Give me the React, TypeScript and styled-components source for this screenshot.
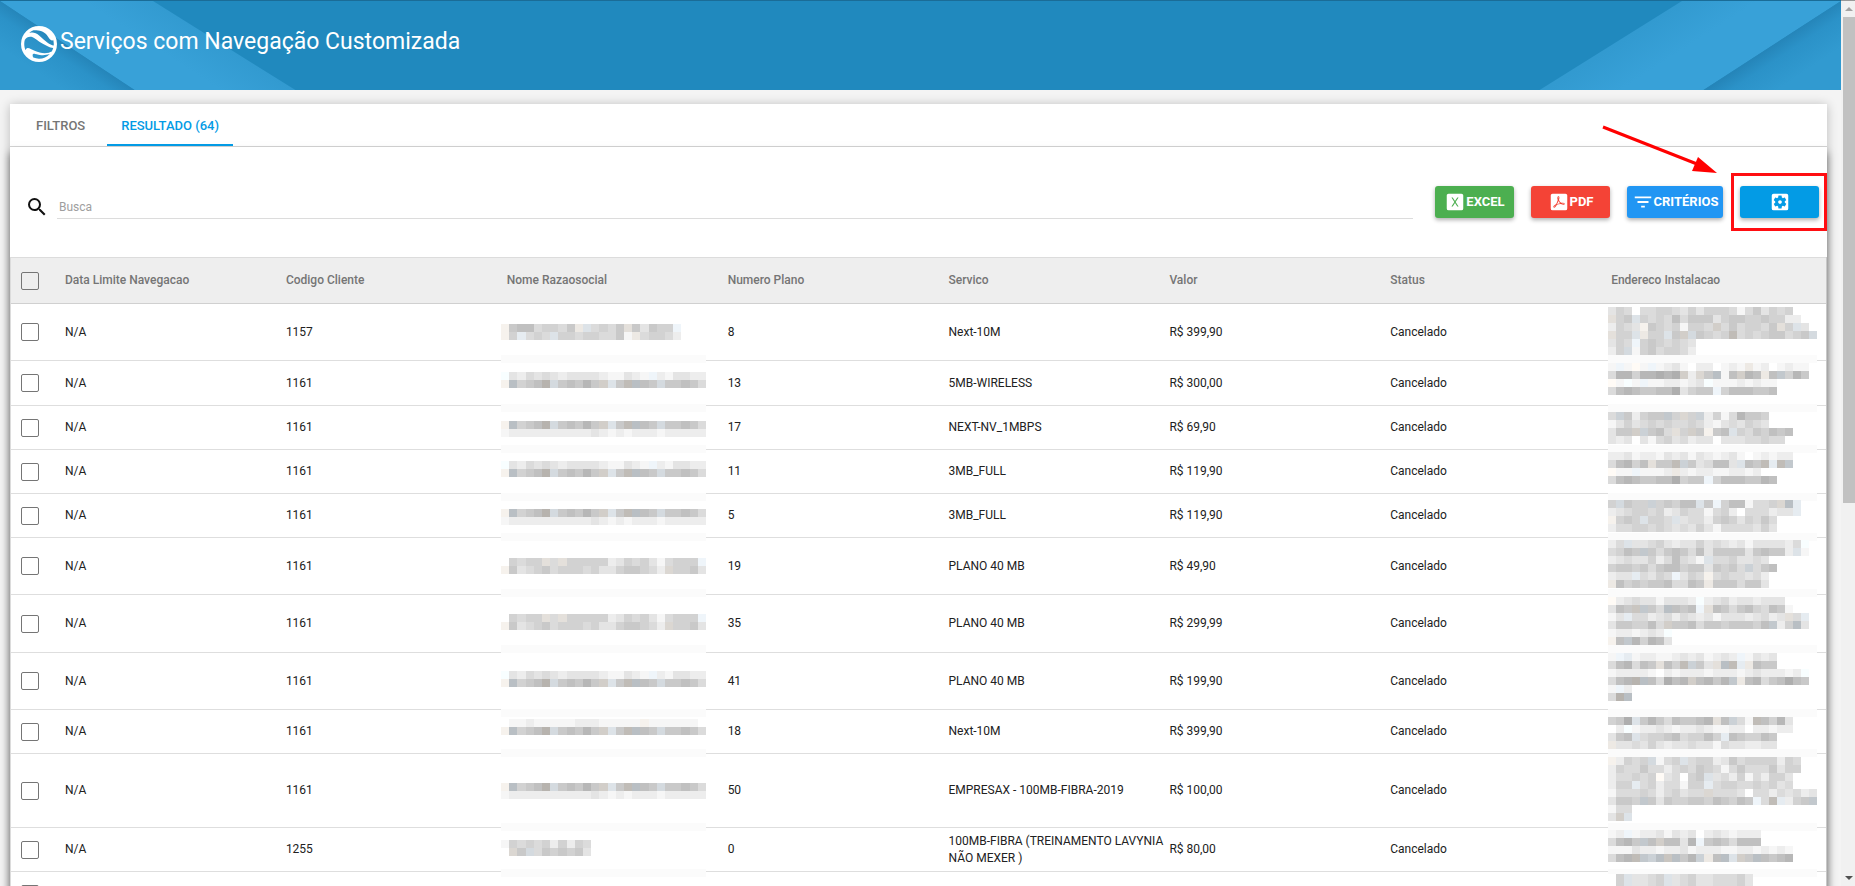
import React from "react";
import styled, { createGlobalStyle } from "styled-components";
import { MdFilterList, MdSearch, MdSettingsApplications } from "react-icons/md";

const GlobalStyle = createGlobalStyle`
  *, *::before, *::after { box-sizing: border-box; }
  body {
    margin: 0;
    background: #f4f4f4;
    color: #212121;
    font: 400 12px/17px Roboto, "Liberation Sans", sans-serif;
  }
  button, input { font-family: inherit; }
`;

const Shell = styled.div`
  display: flex;
  height: 100vh;
`;

const Page = styled.div`
  flex: 1;
  min-width: 0;
  overflow-x: hidden;
  overflow-y: auto;
  scrollbar-width: none;
`;

const Banner = styled.header`
  position: relative;
  display: flex;
  align-items: center;
  height: 90px;
  padding: 0 20px 4px 21px;
  border-top: 1px solid #1a6c97;
  background: #2089be;
  color: #fff;
  overflow: hidden;
`;

const BannerArt = styled.svg<{ $right?: boolean }>`
  position: absolute;
  top: 0;
  ${(p) => (p.$right ? "right: 0; transform: scaleX(-1);" : "left: 0;")}
`;

const Logo = styled.svg`
  position: relative;
  flex: none;
  margin-right: 3px;
`;

const Title = styled.h1`
  position: relative;
  margin: 0;
  padding-bottom: 4px;
  font-size: 23px;
  line-height: 32px;
  font-weight: 400;
`;

const Content = styled.main`
  padding: 14px 14px 0 10px;
`;

const Card = styled.section`
  background: #fff;
  box-shadow: 0 1px 10px rgba(0, 0, 0, 0.24);
`;

const Tabs = styled.nav`
  display: flex;
  gap: 8px;
  height: 43px;
  padding-left: 12px;
  border-bottom: 1px solid #d4d4d4;
`;

const Tab = styled.button<{ $active?: boolean }>`
  height: 42px;
  padding: 0 14px;
  border: 0;
  border-bottom: 2px solid ${(p) => (p.$active ? "#039be5" : "transparent")};
  border-top: 2px solid transparent;
  background: none;
  color: ${(p) => (p.$active ? "#039be5" : "#757575")};
  font-size: 13px;
  line-height: 17px;
  font-weight: 500;
`;

const Panel = styled.div`
  box-shadow: 0 6px 8px rgba(0, 0, 0, 0.5);
`;

const Toolbar = styled.div`
  display: flex;
  align-items: center;
  height: 110px;
  padding: 0 8px 0 15px;
`;

const Search = styled.label`
  display: flex;
  flex: 1;
  align-items: center;
  gap: 8px;
  padding-top: 10px;
  margin-right: 22px;
  color: #111;
`;

const SearchInput = styled.input`
  flex: 1;
  min-width: 0;
  height: 24px;
  padding: 0 2px;
  border: 0;
  border-bottom: 1px solid #dcdcdc;
  background: none;
  font-size: 12px;
  outline: none;
  &::placeholder { color: #9e9e9e; }
`;

const Actions = styled.div`
  display: flex;
  gap: 17px;
`;

const ActionButton = styled.button<{ $color: string; $wide?: boolean }>`
  display: flex;
  align-items: center;
  justify-content: center;
  gap: 0;
  width: ${(p) => (p.$wide ? 96 : 79)}px;
  height: 32px;
  padding: 0;
  border: 0;
  border-radius: 3px;
  background: ${(p) => p.$color};
  box-shadow: 0 2px 4px rgba(0, 0, 0, 0.32);
  color: #fff;
  font-size: 13px;
  line-height: 17px;
  font-weight: 700;
  svg { flex: none; }
`;

const ActionText = styled.span`
  padding-bottom: 2px;
`;

const Marked = styled.div`
  position: relative;
`;

const MarkFrame = styled.span`
  position: absolute;
  inset: -13px -8px -13px -9px;
  border: 3px solid #ff0e12;
  pointer-events: none;
`;

const MarkArrow = styled.svg`
  position: absolute;
  right: 101px;
  bottom: 44px;
  pointer-events: none;
`;

const Table = styled.table`
  width: 100%;
  table-layout: fixed;
  border-collapse: separate;
  border-spacing: 0;
  border-left: 1px solid #dcdcdc;
  border-right: 1px solid #c8c8c8;
`;

const CheckCol = styled.col`
  width: 48px;
`;

const HeadCell = styled.th`
  height: 47px;
  padding: 0 0 0 6px;
  border-top: 1px solid #dcdcdc;
  border-bottom: 1px solid #d0d0d0;
  background: #eee;
  color: #757575;
  font-weight: 500;
  text-align: left;
`;

const Row = styled.tr<{ $height: number }>`
  height: ${(p) => p.$height}px;
`;

const Cell = styled.td`
  position: relative;
  padding: 0 0 0 6px;
  border-bottom: 1px solid #dedede;
`;

const Check = styled.input`
  appearance: none;
  display: block;
  width: 18px;
  height: 18px;
  margin: 0 0 0 4px;
  border: 1px solid #757575;
  border-radius: 2px;
`;

const Pixels = styled.svg<{ $shift: number }>`
  position: absolute;
  top: 0;
  left: ${(p) => p.$shift}px;
  overflow: visible;
`;

const Scrollbar = styled.div`
  display: flex;
  flex: none;
  flex-direction: column;
  width: 14px;
  padding-left: 2px;
  border-top: 1px solid #999;
  background: #f1f1f1;
`;

const ScrollArrow = styled.span<{ $down?: boolean }>`
  display: flex;
  align-items: center;
  justify-content: center;
  height: 16px;
  &::before {
    content: "";
    border: 4px solid transparent;
    ${(p) =>
      p.$down
        ? "border-top-color: #505050; border-bottom: 0;"
        : "border-bottom-color: #a3a3a3; border-top: 0;"}
  }
`;

const ScrollTrack = styled.div`
  flex: 1;
`;

const ScrollThumb = styled.div`
  height: 57%;
  background: #c1c1c1;
`;

/* Shade codes: 0-9 neutral, a-j cool, k-t warm; a higher code is darker. */
function shade(code: string) {
  const n = parseInt(code, 36);
  const level = Math.round(255 - (n % 10) * 9);
  const tint = Math.floor(n / 10);
  const soft = level - 7;
  if (tint === 1) return `rgb(${soft},${level - 1},${Math.min(255, level + 4)})`;
  if (tint === 2) return `rgb(${level},${level - 4},${soft - 2})`;
  return `rgb(${level},${level},${level})`;
}

interface PixelatedProps {
  lines: string[];
  top: number;
  band: number;
  width: number;
  columns: number;
  shift: number;
}

function Pixelated({ lines, top, band, width, columns, shift }: PixelatedProps) {
  const edge = (i: number) => Math.round((i * width) / columns);
  return (
    <Pixels $shift={shift} width={width} height={8} shapeRendering="crispEdges" aria-hidden="true">
      <rect x={0} y={band} width={width} height={8} fill="#fbfbfb" />
      {lines.map((line, r) =>
        Array.from(line.slice(0, columns)).map((c, i) => (
          <rect
            key={`${r}-${i}`}
            x={edge(i)}
            y={top + r * 8}
            width={edge(i + 1) - edge(i)}
            height={8}
            fill={shade(c)}
          />
        ))
      )}
    </Pixels>
  );
}

const dark = "lh567se67686pd6rh76e66764";
const pale = "a32434323333211321b213322";
const faint = "1222222222232121222122222";
const mid = "05455n4n5555523545314555b";
const midLow = "l6345645554533566542o5563";

interface Service {
  client: string;
  plan: string;
  service: string;
  price: string;
  limit: string;
  status: string;
  height: number;
  band: number;
  nameTop: number;
  name: string[];
  addressTop: number;
  address: string[];
}

const cancelled = { limit: "N/A", status: "Cancelado" };

const services: Service[] = [
  {
    ...cancelled, client: "1157", plan: "8", service: "Next-10M", price: "R$ 399,90", height: 57, band: 51,
    nameTop: 20, name: ["l67745546md4546n63655b", "l5c454d5545544 1m45542".replace(" ", "6")],
    addressTop: 3,
    address: [
      "35404455435355541463545", "n56d5454746663566556552k".slice(0, 23) + "2", "2543l65451554p4645546n5d3",
      "n55dm55d6pe6545r454566456e", "354b5654543", "25e15645542",
    ],
  },
  {
    ...cancelled, client: "1161", plan: "13", service: "5MB-WIRELESS", price: "R$ 300,00", height: 45, band: 43,
    nameTop: 11, name: [pale, dark],
    addressTop: 2,
    address: ["1b1k1b12310220121m1201211", "488588989p2o6h17p87m7g586", "k1a1b1122123a11121211", "4787667793566b5777667"],
  },
  {
    ...cancelled, client: "1161", plan: "17", service: "NEXT-NV_1MBPS", price: "R$ 69,90", height: 44, band: 39,
    nameTop: 15, name: [dark, faint],
    addressTop: 6,
    address: ["4f62566g5o5f25148665", "13534545445421343543", "366pf674n5p6l67d5465767", "3230314534233033344544"],
  },
  {
    ...cancelled, client: "1161", plan: "11", service: "3MB_FULL", price: "R$ 119,90", height: 44, band: 43,
    nameTop: 11, name: [pale, dark],
    addressTop: 2,
    address: ["22312213231321231012122", "47857n66rf634773d76rcrg", "k11b1112m2122112212", "478766779566b57776687"],
  },
  {
    ...cancelled, client: "1161", plan: "5", service: "3MB_FULL", price: "R$ 119,90", height: 44, band: 39,
    nameTop: 15, name: [dark, faint],
    addressTop: 6,
    address: ["5e655f56577d6b5771445ohc", "23455452354414520444233c", "l565d554d344256535464", "244554543435314444353"],
  },
  {
    ...cancelled, client: "1161", plan: "19", service: "PLANO 40 MB", price: "R$ 49,90", height: 57, band: 51,
    nameTop: 20, name: [mid, midLow],
    addressTop: 2,
    address: ["24d33453233534323133332 4a".replace(" ", ""), "4576g646764736666367662d1", "234335247431d4453343", "56656467756636564f467", "233c4354b354l4544342", "m75656674476m6664663"],
  },
  {
    ...cancelled, client: "1161", plan: "35", service: "PLANO 40 MB", price: "R$ 299,99", height: 58, band: 50,
    nameTop: 19, name: [mid, midLow],
    addressTop: 2,
    address: ["k2343313332a2342332333", "376qg64h767bn7646754761", "13c44234243231333234 23n4c".replace(" ", ""), "3665574p66746656665 7g25h3".replace(" ", ""), "1221232a", "l7g85873"],
  },
  {
    ...cancelled, client: "1161", plan: "41", service: "PLANO 40 MB", price: "R$ 199,90", height: 57, band: 56,
    nameTop: 18, name: [pale, dark],
    addressTop: 0,
    address: ["1bc12211232312 32b1323".replace(" ", ""), "47847 6n75rf63nhrcm766".replace(" ", "").slice(0, 21), "122221021222122212322212a", "478sh74978p7868gm78467976", "1b2", "4sh"],
  },
  {
    ...cancelled, client: "1161", plan: "18", service: "Next-10M", price: "R$ 399,90", height: 44, band: 39,
    nameTop: 9, name: ["01121111122211111l1111110", dark],
    addressTop: 7,
    address: ["569d686476678n7f41r7583", "02a12232122321122022122", "367d4556745575c7655 76".replace(" ", ""), "m33435323343314332233"],
  },
  {
    ...cancelled, client: "1161", plan: "50", service: "EMPRESAX - 100MB-FIBRA-2019", price: "R$ 100,00", height: 74, band: 69,
    nameTop: 29, name: [dark, faint],
    addressTop: 3,
    address: ["l2545e145d45523645555254", "254464424546541464446355", "24454 5k34056d3425142553".replace(" ", ""), "255c45244155c4554454534", "144454245344o4443044243423", "3665g63655665765 76b4rc256g4".replace(" ", ""), "144", "3pd"],
  },
  {
    ...cancelled, client: "1255", plan: "0", service: "100MB-FIBRA (TREINAMENTO LAVYNIA NÃO MEXER )", price: "R$ 80,00", height: 44, band: 41,
    nameTop: 12, name: ["15454525254", "0o6e4656563"],
    addressTop: 2,
    address: ["12b122313230232 1222".replace(" ", ""), "4786g7p7738b6764777", "11132212231222112212121", "478rgfhqh68fm7hdp6h7678"],
  },
  {
    client: "", plan: "", service: "", price: "", limit: "", status: "", height: 44, band: 39,
    nameTop: 14, name: [],
    addressTop: 2,
    address: ["05d3345d3453344453", "05d3345d3453344453"],
  },
];

const headings = [
  "Data Limite Navegacao", "Codigo Cliente", "Nome Razaosocial", "Numero Plano",
  "Servico", "Valor", "Status", "Endereco Instalacao",
];

const GLOBE =
  "M12.4,7.56C9.6,4.91 7.3,5.65 6.31,6.1C7.06,5.38 7.94,4.8 8.92,4.4C11.7,4.3 14.83,4.84 16.56,7.31C16.56,7.31 19,11.5 19.86,9.65C20.08,10.4 20.2,11.18 20.2,12C20.2,12.3 20.18,12.59 20.15,12.88C18.12,12.65 15.33,10.32 12.4,7.56M19.1,16.1C18.16,16.47 17,17.1 15.14,17.1C13.26,17.1 11.61,16.35 9.56,15.7C7.7,15.11 7,14.2 5.72,14.2C5.06,14.2 4.73,14.86 4.55,15.41C4.07,14.37 3.8,13.22 3.8,12C3.8,11.19 3.92,10.42 4.14,9.68C5.4,8.1 7.33,7.12 10.09,9.26C10.09,9.26 16.32,13.92 19.88,14.23C19.7,14.89 19.43,15.5 19.1,16.1M12,20.2C10.88,20.2 9.81,19.97 8.83,19.56C8.21,18.08 8.22,16.92 9.95,17.5C9.95,17.5 13.87,19 18,17.58C16.5,19.19 14.37,20.2 12,20.2M12,2A10,10 0 0,0 2,12A10,10 0 0,0 12,22A10,10 0 0,0 22,12A10,10 0 0,0 12,2Z";
const SHEET =
  "M15.9,17H14.5L12,13L9.5,17H8.1L11.3,12L8.1,7H9.5L12,11L14.5,7H15.9L12.7,12M19,3H5C3.89,3 3,3.89 3,5V19A2,2 0 0,0 5,21H19A2,2 0 0,0 21,19V5C21,3.89 20.1,3 19,3Z";
const PDF =
  "M11.43,10.94C11.2,11.68 10.87,12.47 10.42,13.34C10.22,13.72 10,14.08 9.92,14.38L10.03,14.34V14.34C11.3,13.85 12.5,13.57 13.37,13.41C13.22,13.31 13.08,13.2 12.96,13.09C12.36,12.58 11.84,11.84 11.43,10.94M17.91,14.75C17.74,14.94 17.44,15.05 17,15.05C16.24,15.05 15,14.82 14,14.31C12.28,14.5 11,14.73 9.97,15.06C9.92,15.08 9.86,15.1 9.79,15.13C8.55,17.25 7.63,18.2 6.82,18.2C6.66,18.2 6.5,18.16 6.38,18.09L5.9,17.78L5.87,17.73C5.8,17.55 5.78,17.38 5.82,17.19C5.93,16.66 6.5,15.82 7.7,15.07C7.89,14.93 8.19,14.77 8.59,14.58C8.89,14.06 9.21,13.45 9.55,12.78C10.06,11.75 10.38,10.73 10.63,9.85V9.84C10.26,8.63 10.04,7.9 10.41,6.57C10.5,6.19 10.83,5.8 11.2,5.8H11.44C11.67,5.8 11.89,5.88 12.05,6.04C12.71,6.7 12.4,8.31 12.07,9.64C12.05,9.7 12.04,9.75 12.03,9.78C12.43,10.91 13,11.82 13.63,12.34C13.89,12.54 14.18,12.74 14.5,12.92C14.95,12.87 15.38,12.85 15.79,12.85C17.03,12.85 17.78,13.07 18.07,13.54C18.17,13.7 18.22,13.89 18.19,14.09C18.18,14.34 18.09,14.57 17.91,14.75M19,3H5C3.89,3 3,3.89 3,5V19A2,2 0 0,0 5,21H19A2,2 0 0,0 21,19V5C21,3.89 20.1,3 19,3M17.5,14.04C17.4,13.94 17,13.69 15.6,13.69C15.53,13.69 15.46,13.69 15.37,13.79C16.1,14.11 16.81,14.3 17.27,14.3C17.34,14.3 17.4,14.29 17.46,14.28H17.5C17.55,14.26 17.58,14.25 17.59,14.15C17.57,14.12 17.55,14.08 17.5,14.04M8.33,15.5C8.12,15.62 7.95,15.73 7.85,15.81C7.14,16.46 6.69,17.12 6.64,17.5C7.09,17.35 7.68,16.69 8.33,15.5M11.35,8.59L11.4,8.55C11.47,8.23 11.5,7.95 11.56,7.73L11.59,7.57C11.69,7 11.67,6.71 11.5,6.47L11.35,6.42C11.33,6.45 11.3,6.5 11.28,6.54C11.11,6.96 11.12,7.69 11.35,8.59Z";

function BoxIcon({ path }: { path: string }) {
  return (
    <svg width={22} height={22} viewBox="0 0 24 24" fill="currentColor" aria-hidden="true">
      <path d={path} />
    </svg>
  );
}

function Stripes({ right }: { right?: boolean }) {
  const id = right ? "stripe-right" : "stripe-left";
  const foot = right ? 139 : 136;
  const outerTop = right ? 159 : 153;
  const outerFoot = right ? 303 : 297;
  return (
    <BannerArt $right={right} width={304} height={90} viewBox="0 0 304 90" aria-hidden="true">
      <defs>
        <linearGradient id={`${id}-a`} gradientUnits="userSpaceOnUse" x1={69} y1={45} x2={47} y2={78}>
          <stop offset="0" stopColor="#2585b9" />
          <stop offset="0.35" stopColor="#2b92c8" />
          <stop offset="1" stopColor="#319ad0" />
        </linearGradient>
        <linearGradient id={`${id}-b`} gradientUnits="userSpaceOnUse" x1={227} y1={45} x2={205} y2={79}>
          <stop offset="0" stopColor="#329ad0" />
          <stop offset="1" stopColor="#38a1d8" />
        </linearGradient>
      </defs>
      <path d={`M0 0H${outerTop}L${outerFoot} 90H${foot}Z`} fill={`url(#${id}-b)`} />
      <path d={`M0 0L${foot} 90H0Z`} fill={`url(#${id}-a)`} />
    </BannerArt>
  );
}

export default function App() {
  return (
    <Shell>
      <GlobalStyle />
      <Page>
        <Banner>
          <Stripes />
          <Stripes right />
          <Logo width={36} height={36} viewBox="2 2 20 20" fill="#fff" aria-hidden="true">
            <path d={GLOBE} />
          </Logo>
          <Title>Serviços com Navegação Customizada</Title>
        </Banner>
        <Content>
          <Card>
            <Tabs>
              <Tab type="button">FILTROS</Tab>
              <Tab type="button" $active>RESULTADO (64)</Tab>
            </Tabs>
            <Panel>
              <Toolbar>
                <Search>
                  <MdSearch size={24} aria-hidden="true" />
                  <SearchInput type="text" placeholder="Busca" aria-label="Busca" />
                </Search>
                <Actions>
                  <ActionButton type="button" $color="#4caf50">
                    <BoxIcon path={SHEET} />
                    <ActionText>EXCEL</ActionText>
                  </ActionButton>
                  <ActionButton type="button" $color="#f44336">
                    <BoxIcon path={PDF} />
                    <ActionText>PDF</ActionText>
                  </ActionButton>
                  <ActionButton type="button" $color="#2196f3" $wide>
                    <MdFilterList size={22} />
                    <ActionText>CRITÉRIOS</ActionText>
                  </ActionButton>
                  <Marked>
                    <ActionButton type="button" $color="#039be5" aria-label="Configurações">
                      <MdSettingsApplications size={22} />
                    </ActionButton>
                    <MarkFrame />
                    <MarkArrow width={117} height={50} viewBox="0 0 117 50" aria-hidden="true">
                      <path d="M2 3L96 40" stroke="#f00" strokeWidth={3} />
                      <path d="M97 33L116 49L91 47Z" fill="#f00" />
                    </MarkArrow>
                  </Marked>
                </Actions>
              </Toolbar>
              <Table>
                <colgroup>
                  <CheckCol />
                  {headings.map((h) => <col key={h} />)}
                </colgroup>
                <thead>
                  <tr>
                    <HeadCell><Check type="checkbox" aria-label="Selecionar todos" /></HeadCell>
                    {headings.map((h) => <HeadCell key={h}>{h}</HeadCell>)}
                  </tr>
                </thead>
                <tbody>
                  {services.map((s, i) => (
                    <Row key={i} $height={s.height}>
                      <Cell><Check type="checkbox" aria-label={`Selecionar linha ${i + 1}`} /></Cell>
                      <Cell>{s.limit}</Cell>
                      <Cell>{s.client}</Cell>
                      <Cell>
                        <Pixelated lines={s.name} top={s.nameTop} band={s.band} width={205} columns={25} shift={0} />
                      </Cell>
                      <Cell>{s.plan}</Cell>
                      <Cell>{s.service}</Cell>
                      <Cell>{s.price}</Cell>
                      <Cell>{s.status}</Cell>
                      <Cell>
                        <Pixelated lines={s.address} top={s.addressTop} band={s.band} width={209} columns={26} shift={3} />
                      </Cell>
                    </Row>
                  ))}
                </tbody>
              </Table>
            </Panel>
          </Card>
        </Content>
      </Page>
      <Scrollbar aria-hidden="true">
        <ScrollArrow />
        <ScrollTrack><ScrollThumb /></ScrollTrack>
        <ScrollArrow $down />
      </Scrollbar>
    </Shell>
  );
}
